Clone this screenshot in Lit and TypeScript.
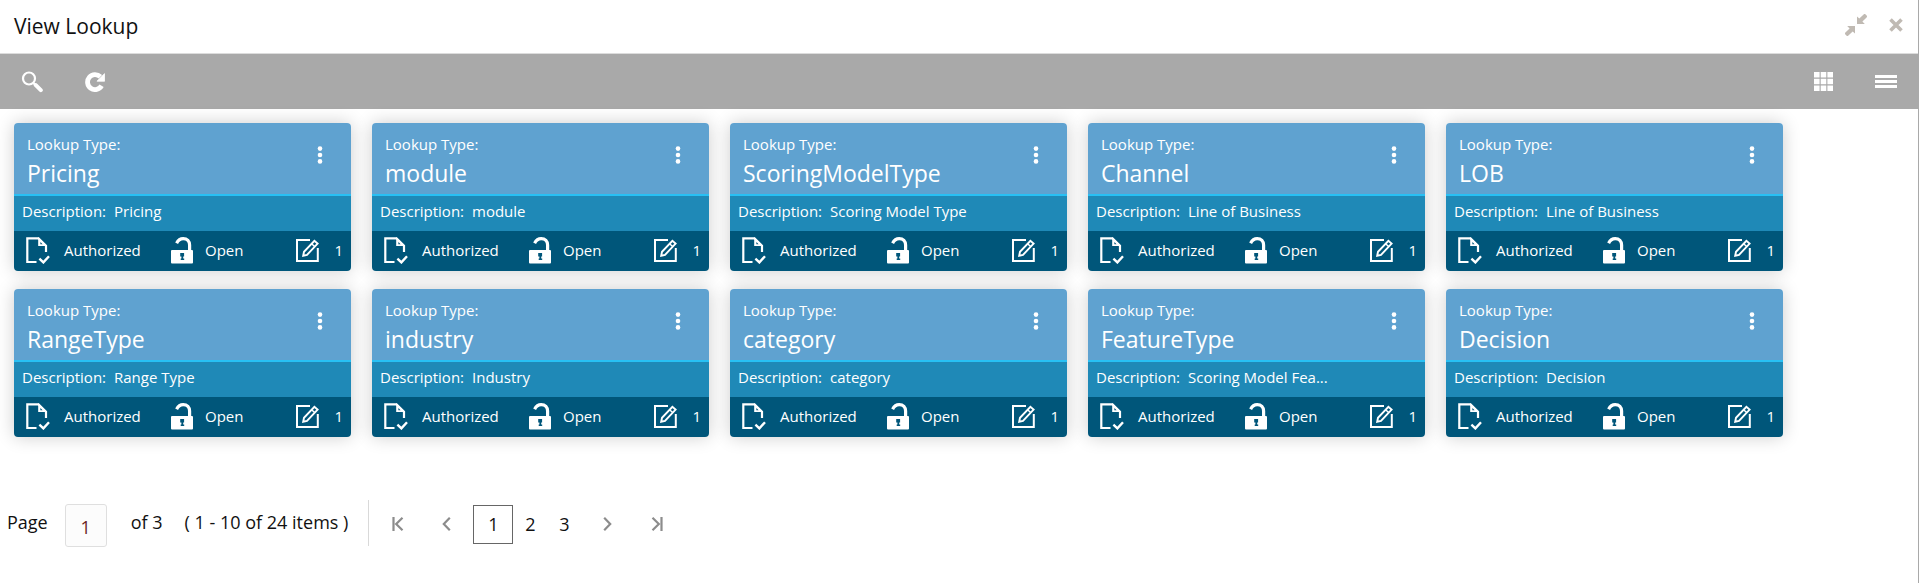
import { LitElement, html, css, svg } from "lit";
import { customElement, property, state } from "lit/decorators.js";

interface Lookup {
  type: string;
  description: string;
}

const LOOKUPS: Lookup[] = [
  { type: "Pricing", description: "Pricing" },
  { type: "module", description: "module" },
  { type: "ScoringModelType", description: "Scoring Model Type" },
  { type: "Channel", description: "Line of Business" },
  { type: "LOB", description: "Line of Business" },
  { type: "RangeType", description: "Range Type" },
  { type: "industry", description: "Industry" },
  { type: "category", description: "category" },
  { type: "FeatureType", description: "Scoring Model Fea..." },
  { type: "Decision", description: "Decision" },
];

const icon = (w: number, h: number, body: unknown) => html`
  <svg width=${w} height=${h} viewBox="0 0 ${w} ${h}" fill="none" aria-hidden="true">${body}</svg>
`;

const searchIcon = icon(22, 22, svg`
  <circle cx="8" cy="7.5" r="6" stroke="currentColor" stroke-width="2.2"/>
  <path d="M12.4 12l2 2" stroke="currentColor" stroke-width="2.4"/>
  <path d="M14.8 14.2l5 5" stroke="currentColor" stroke-width="4" stroke-linecap="round"/>`);
const refreshIcon = icon(20, 20, svg`
  <path d="M16.6 13.8A7.5 7.5 0 1 1 15.4 4.8" stroke="currentColor" stroke-width="4.8"/>
  <path d="M19.6 1.6v7.6H12z" fill="currentColor" stroke="currentColor" stroke-width=".8"/>`);
const gridIcon = icon(19, 19, svg`
  <path d="M0 0h5.6v5.6H0zM6.7 0h5.6v5.6H6.7zM13.4 0H19v5.6h-5.6zM0 6.7h5.6v5.6H0zM6.7 6.7h5.6v5.6H6.7zM13.4 6.7H19v5.6h-5.6zM0 13.4h5.6V19H0zM6.7 13.4h5.6V19H6.7zM13.4 13.4H19V19h-5.6z" fill="currentColor"/>`);
const listIcon = icon(22, 13, svg`
  <path d="M0 0h22v3H0zM0 5h22v3H0zM0 10h22v3H0z" fill="currentColor"/>`);
const shrinkIcon = icon(22, 22, svg`
  <path d="M12 2.4l2.3 2.2L18.6.4a1.4 1.4 0 0 1 2 0l1 1a1.4 1.4 0 0 1 0 2l-4.2 4.2L19.8 10H12z" fill="currentColor"/>
  <path d="M10 19.6l-2.3-2.2-4.3 4.2a1.4 1.4 0 0 1-2 0l-1-1a1.4 1.4 0 0 1 0-2l4.2-4.2L2.2 12H10z" fill="currentColor"/>`);
const closeIcon = icon(14, 14, svg`
  <path d="M1.5 1.5l11 11M12.5 1.5l-11 11" stroke="currentColor" stroke-width="3.6"/>`);
const kebabIcon = icon(6, 18, svg`
  <g fill="currentColor"><circle cx="3" cy="2.6" r="2.3"/><circle cx="3" cy="9" r="2.3"/><circle cx="3" cy="15.4" r="2.3"/></g>`);
const documentIcon = icon(24, 27, svg`
  <path d="M10.5 25H1.3V1.3h11.2L20 8.8V15" stroke="currentColor" stroke-width="2.2"/>
  <path d="M12.2 0L21 9h-8.8z" fill="currentColor"/>
  <path d="M14.4 5v2.2h2.2z" fill="#00567a"/>
  <path d="M13.4 21.6l4 3.8 5.6-6.2" stroke="currentColor" stroke-width="2.4"/>`);
const lockIcon = icon(22, 27, svg`
  <path d="M5.6 6.2C7.4 2.6 10 1.6 12.2 1.6c4 0 6.4 2.8 6.4 6.4v6" stroke="currentColor" stroke-width="3.2"/>
  <rect x="0" y="13" width="22" height="13.6" rx="1" fill="currentColor"/>
  <path d="M9.2 16h3.9v3.4h-.9v2.2h1v1.4H9.7v-1.4h.7v-2.2H9.2z" fill="#00567a"/>`);
const editIcon = icon(23, 23, svg`
  <path d="M14 1H1v21h20.8V9" stroke="currentColor" stroke-width="2"/>
  <path d="M7.2 16.8l.8-4L18.4 1.8l3.2 2.8L11 16z" stroke="currentColor" stroke-width="1.9"/>
  <path d="M15.6 4.8l3.2 2.8" stroke="currentColor" stroke-width="1.4"/>`);
const firstIcon = icon(12, 14, svg`
  <path d="M1.5 0v14M10.5 .8L4.2 7l6.3 6.2" stroke="currentColor" stroke-width="2.2"/>`);
const prevIcon = icon(9, 14, svg`
  <path d="M7.8 .8L1.8 7l6 6.2" stroke="currentColor" stroke-width="2.2"/>`);
const nextIcon = icon(9, 14, svg`
  <path d="M1.2 .8l6 6.2-6 6.2" stroke="currentColor" stroke-width="2.2"/>`);
const lastIcon = icon(12, 14, svg`
  <path d="M10.5 0v14M1.5 .8L7.8 7l-6.3 6.2" stroke="currentColor" stroke-width="2.2"/>`);

const resetButton = css`
  button {
    display: flex;
    align-items: center;
    justify-content: center;
    margin: 0;
    padding: 0;
    border: 0;
    background: none;
    color: inherit;
    font: inherit;
    cursor: pointer;
  }
  svg {
    display: block;
    flex: none;
  }
`;

@customElement("lookup-card")
export class LookupCard extends LitElement {
  @property({ attribute: false }) lookup!: Lookup;

  static styles = [
    resetButton,
    css`
      :host {
        display: block;
        border-radius: 4px;
        overflow: hidden;
        color: #fff;
        font-size: 15px;
        line-height: 20px;
        box-shadow: 0 0 18px rgba(0, 0, 0, 0.2);
      }
      .head {
        display: flex;
        justify-content: space-between;
        align-items: flex-start;
        height: 71px;
        box-sizing: border-box;
        padding: 11px 20px 0 13px;
        background: #5fa2d0;
      }
      .value {
        margin: 0;
        font-size: 23px;
        line-height: 38px;
        font-weight: 400;
      }
      .menu {
        width: 22px;
        height: 42px;
      }
      .description {
        display: flex;
        gap: 8px;
        padding: 4px 8px 9px;
        border-top: 2px solid #28c0f4;
        background: #1f89b7;
        line-height: 22px;
      }
      .status {
        display: grid;
        grid-template-columns: 38px 107px 34px 1fr auto auto;
        align-items: center;
        height: 40px;
        box-sizing: border-box;
        padding: 0 8px 2px 12px;
        background: #00567a;
      }
      .count {
        padding-left: 15px;
      }
    `,
  ];

  render() {
    return html`
      <div class="head">
        <div>
          <div>Lookup Type:</div>
          <h2 class="value">${this.lookup.type}</h2>
        </div>
        <button class="menu" aria-label="Actions">${kebabIcon}</button>
      </div>
      <div class="description"><span>Description:</span><span>${this.lookup.description}</span></div>
      <div class="status">
        ${documentIcon}<span>Authorized</span>
        ${lockIcon}<span>Open</span>
        ${editIcon}<span class="count">1</span>
      </div>
    `;
  }
}

@customElement("app-root")
export class AppRoot extends LitElement {
  @state() private page = 1;

  static styles = [
    resetButton,
    css`
      :host {
        display: block;
        min-height: 100vh;
        box-sizing: border-box;
        border-right: 1px solid #a9a9a9;
        background: #fff;
        color: #111;
        font-family: "Segoe UI", "Open Sans", "Noto Sans", sans-serif;
        font-size: 18px;
        line-height: 24px;
      }
      .title-bar {
        display: flex;
        align-items: center;
        justify-content: space-between;
        height: 53px;
        padding: 0 15px 0 14px;
        border-bottom: 1px solid #dcdcdc;
      }
      .title {
        margin: 0;
        padding-bottom: 2px;
        font-size: 21px;
        font-weight: 400;
      }
      .window-actions {
        display: flex;
        align-items: center;
        gap: 22px;
        padding-bottom: 4px;
        color: #c0bab3;
      }
      .toolbar {
        display: flex;
        align-items: center;
        justify-content: space-between;
        height: 55px;
        padding: 0 21px;
        background: #a9a9a9;
        color: #fff;
      }
      .tools {
        display: flex;
        align-items: center;
        gap: 42px;
      }
      .cards {
        display: flex;
        flex-wrap: wrap;
        gap: 18px 21px;
        padding: 14px;
      }
      .card {
        flex: 0 0 337px;
      }
      .pager {
        display: flex;
        align-items: center;
        padding: 48px 7px 0;
      }
      .page-label,
      .total,
      .range {
        padding-bottom: 2px;
      }
      .page-input {
        width: 42px;
        height: 43px;
        margin: 5px 24px 0 17px;
        box-sizing: border-box;
        padding: 2px 0 0;
        border: 1px solid #dfdfdf;
        border-radius: 3px;
        background: #fcfcfc;
        color: #6b1f1f;
        font: inherit;
        text-align: center;
      }
      .total {
        margin-right: 22px;
      }
      .nav {
        display: flex;
        align-items: center;
        height: 46px;
        margin-left: 20px;
        padding: 2px 0 0 4px;
        border-left: 1px solid #d9d9d9;
        box-sizing: border-box;
      }
      .step {
        width: 49px;
        height: 40px;
        color: #8c8c8c;
      }
      .numbers {
        display: flex;
        padding: 0 2px;
      }
      .number {
        width: 34px;
        height: 39px;
      }
      .number.current {
        width: 40px;
        border: 1px solid #666;
      }
    `,
  ];

  private go(page: number) {
    this.page = Math.min(3, Math.max(1, page));
  }

  render() {
    return html`
      <header class="title-bar">
        <h1 class="title">View Lookup</h1>
        <div class="window-actions">
          <button aria-label="Collapse">${shrinkIcon}</button>
          <button aria-label="Close">${closeIcon}</button>
        </div>
      </header>
      <div class="toolbar">
        <div class="tools">
          <button aria-label="Search">${searchIcon}</button>
          <button aria-label="Refresh">${refreshIcon}</button>
        </div>
        <div class="tools">
          <button aria-label="Tile view">${gridIcon}</button>
          <button aria-label="List view">${listIcon}</button>
        </div>
      </div>
      <main class="cards">
        ${LOOKUPS.map((l) => html`<lookup-card class="card" .lookup=${l}></lookup-card>`)}
      </main>
      <footer class="pager">
        <label class="page-label" for="page">Page</label>
        <input
          class="page-input"
          id="page"
          type="text"
          .value=${String(this.page)}
          @change=${(e: Event) => this.go(Number((e.target as HTMLInputElement).value) || 1)}
        />
        <span class="total">of 3</span>
        <span class="range">( 1 - 10 of 24 items )</span>
        <nav class="nav" aria-label="Pagination">
          <button class="step" aria-label="First page" @click=${() => this.go(1)}>${firstIcon}</button>
          <button class="step" aria-label="Previous page" @click=${() => this.go(this.page - 1)}>${prevIcon}</button>
          <div class="numbers">
            ${[1, 2, 3].map(
              (n) => html`<button class="number ${n === this.page ? "current" : ""}" @click=${() => this.go(n)}>${n}</button>`
            )}
          </div>
          <button class="step" aria-label="Next page" @click=${() => this.go(this.page + 1)}>${nextIcon}</button>
          <button class="step" aria-label="Last page" @click=${() => this.go(3)}>${lastIcon}</button>
        </nav>
      </footer>
    `;
  }
}
